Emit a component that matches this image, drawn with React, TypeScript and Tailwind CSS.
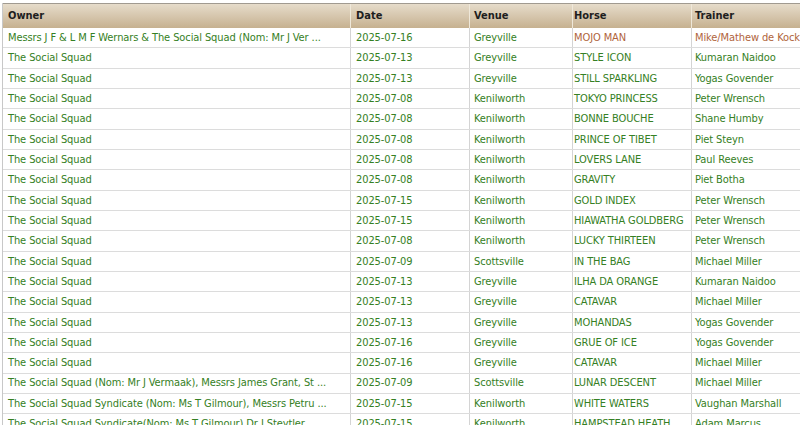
import React from "react";

type Row = [string, string, string, string, string];

const rows: Row[] = [
  ["Messrs J F & L M F Wernars & The Social Squad (Nom: Mr J Ver ...", "2025-07-16", "Greyville", "MOJO MAN", "Mike/Mathew de Kock"],
  ["The Social Squad", "2025-07-13", "Greyville", "STYLE ICON", "Kumaran Naidoo"],
  ["The Social Squad", "2025-07-13", "Greyville", "STILL SPARKLING", "Yogas Govender"],
  ["The Social Squad", "2025-07-08", "Kenilworth", "TOKYO PRINCESS", "Peter Wrensch"],
  ["The Social Squad", "2025-07-08", "Kenilworth", "BONNE BOUCHE", "Shane Humby"],
  ["The Social Squad", "2025-07-08", "Kenilworth", "PRINCE OF TIBET", "Piet Steyn"],
  ["The Social Squad", "2025-07-08", "Kenilworth", "LOVERS LANE", "Paul Reeves"],
  ["The Social Squad", "2025-07-08", "Kenilworth", "GRAVITY", "Piet Botha"],
  ["The Social Squad", "2025-07-15", "Kenilworth", "GOLD INDEX", "Peter Wrensch"],
  ["The Social Squad", "2025-07-15", "Kenilworth", "HIAWATHA GOLDBERG", "Peter Wrensch"],
  ["The Social Squad", "2025-07-08", "Kenilworth", "LUCKY THIRTEEN", "Peter Wrensch"],
  ["The Social Squad", "2025-07-09", "Scottsville", "IN THE BAG", "Michael Miller"],
  ["The Social Squad", "2025-07-13", "Greyville", "ILHA DA ORANGE", "Kumaran Naidoo"],
  ["The Social Squad", "2025-07-13", "Greyville", "CATAVAR", "Michael Miller"],
  ["The Social Squad", "2025-07-13", "Greyville", "MOHANDAS", "Yogas Govender"],
  ["The Social Squad", "2025-07-16", "Greyville", "GRUE OF ICE", "Yogas Govender"],
  ["The Social Squad", "2025-07-16", "Greyville", "CATAVAR", "Michael Miller"],
  ["The Social Squad (Nom: Mr J Vermaak), Messrs James Grant, St ...", "2025-07-09", "Scottsville", "LUNAR DESCENT", "Michael Miller"],
  ["The Social Squad Syndicate (Nom: Ms T Gilmour), Messrs Petru ...", "2025-07-15", "Kenilworth", "WHITE WATERS", "Vaughan Marshall"],
  ["The Social Squad Syndicate(Nom: Ms T Gilmour) Dr J Steytler...", "2025-07-15", "Kenilworth", "HAMPSTEAD HEATH", "Adam Marcus"],
];

const widths = ["w-[347px]", "w-[119px]", "w-[103px]", "w-[119px]", "w-[140px]"];
const pads = ["pl-[5px]", "pl-[5px]", "pl-[4px]", "pl-[1px]", "pl-[3px]"];
const headers = ["Owner", "Date", "Venue", "Horse", "Trainer"];

export default function App() {
  return (
    <div
      className="w-[800px] h-[437px] bg-white overflow-hidden"
      style={{ fontFamily: '"DejaVu Sans Condensed", "DejaVu Sans", sans-serif' }}
    >
      <div className="h-[425px] overflow-hidden pl-[2px] pt-[3px]">
        <div className="border-l border-[#c8c8c8] min-w-[830px]">
          <div className="flex h-[25px] border-t border-[#a09a90] bg-gradient-to-b from-[#e6dccb] to-[#c6b190]">
            {headers.map((h, i) => (
              <div
                key={h}
                className={`${widths[i]} ${pads[i]} shrink-0 flex items-center text-[11px] font-bold text-[#1e1e1e] ${i > 0 ? "border-l border-[#efe8da]" : ""}`}
              >
                {h}
              </div>
            ))}
          </div>
          {rows.map((r, ri) => (
            <div key={ri} className="flex h-[20.33px] border-b border-[#dcdcdc]">
              {r.map((c, ci) => {
                const brown = ri === 0 && ci >= 3;
                return (
                  <div
                    key={ci}
                    className={`${widths[ci]} ${pads[ci]} shrink-0 flex items-center pt-[1px] whitespace-nowrap overflow-hidden text-[11px] tracking-[-0.1px] ${ci === 0 ? "" : "border-l border-[#d4d4d4]"} ${brown ? "text-[#b0643c]" : "text-[#358024]"}`}
                  >
                    {c}
                  </div>
                );
              })}
            </div>
          ))}
        </div>
      </div>
    </div>
  );
}
